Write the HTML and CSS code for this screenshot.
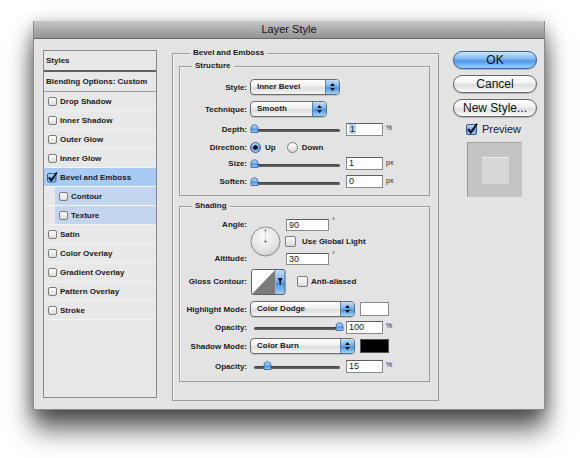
FILE: index.html
```html
<!DOCTYPE html>
<html>
<head>
	<meta charset="utf-8">
	<title>Layer Style</title>
	<link rel="stylesheet" href="styles.css">
</head>
<body>
	<svg class="defs" width="0" height="0">
		<defs>
			<linearGradient id="aqua" x1="0" y1="0" x2="0" y2="1">
				<stop offset="0" stop-color="#c4e0fb"/>
				<stop offset="0.45" stop-color="#78b3ee"/>
				<stop offset="0.55" stop-color="#4a91e4"/>
				<stop offset="1" stop-color="#9fd4fb"/>
			</linearGradient>
			<radialGradient id="dial" cx="0.45" cy="0.35" r="0.7">
				<stop offset="0" stop-color="#fbfbfb"/>
				<stop offset="0.7" stop-color="#e2e2e2"/>
				<stop offset="1" stop-color="#c2c2c2"/>
			</radialGradient>
		</defs>
	</svg>

	<div class="dialog">
		<div class="titlebar">Layer Style</div>
		<div class="dialog-body">

			<ul class="styles-list">
				<li class="styles-head">Styles</li>
				<li class="blend-row">Blending Options: Custom</li>
				<li class="fx"><span class="check"></span>Drop Shadow</li>
				<li class="fx"><span class="check"></span>Inner Shadow</li>
				<li class="fx"><span class="check"></span>Outer Glow</li>
				<li class="fx"><span class="check"></span>Inner Glow</li>
				<li class="fx selected">
					<svg class="check-on" width="11" height="11" viewBox="0 0 11 11"><rect x="0.5" y="1.5" width="8.5" height="8.5" rx="1.5" fill="url(#aqua)" stroke="#33598f"/><path d="M2 5.5 L4.2 8.6 L9.8 0.6" fill="none" stroke="#000" stroke-width="1.7"/></svg>Bevel and Emboss
				</li>
				<li class="fx sub"><span class="check"></span>Contour</li>
				<li class="fx sub"><span class="check"></span>Texture</li>
				<li class="fx"><span class="check"></span>Satin</li>
				<li class="fx"><span class="check"></span>Color Overlay</li>
				<li class="fx"><span class="check"></span>Gradient Overlay</li>
				<li class="fx"><span class="check"></span>Pattern Overlay</li>
				<li class="fx"><span class="check"></span>Stroke</li>
			</ul>

			<div class="group outer">
				<div class="group-title">Bevel and Emboss</div>

				<div class="group structure">
					<div class="group-title">Structure</div>
					<div class="rows structure-rows">
						<div class="row h20">
							<span class="lbl">Style:</span>
							<div class="select w90"><span class="select-text">Inner Bevel</span><span class="select-arrows"><svg width="7" height="10" viewBox="0 0 7 10"><path d="M3.5 1 L6 4 L1 4 Z M1 6 L6 6 L3.5 9 Z" fill="#111"/></svg></span></div>
						</div>
						<div class="row h20">
							<span class="lbl">Technique:</span>
							<div class="select w77"><span class="select-text">Smooth</span><span class="select-arrows"><svg width="7" height="10" viewBox="0 0 7 10"><path d="M3.5 1 L6 4 L1 4 Z M1 6 L6 6 L3.5 9 Z" fill="#111"/></svg></span></div>
						</div>
						<div class="row h16">
							<span class="lbl">Depth:</span>
							<div class="slider">
								<div class="track"></div>
								<svg class="knob" style="left: 0px" width="9" height="9" viewBox="0 0 9 9"><path d="M1 8.5 L1 5 A3.5 4.2 0 0 1 8 5 L8 8.5 Z" fill="url(#aqua)" stroke="#2f5a94" stroke-width="0.8"/></svg>
							</div>
							<span class="field"><span class="sel">1</span></span>
							<span class="unit">%</span>
						</div>
						<div class="row h16">
							<span class="lbl">Direction:</span>
							<span class="radio on"></span><span class="opt">Up</span>
							<span class="radio off"></span><span class="opt">Down</span>
						</div>
						<div class="row h13">
							<span class="lbl">Size:</span>
							<div class="slider">
								<div class="track"></div>
								<svg class="knob" style="left: 0px" width="9" height="9" viewBox="0 0 9 9"><path d="M1 8.5 L1 5 A3.5 4.2 0 0 1 8 5 L8 8.5 Z" fill="url(#aqua)" stroke="#2f5a94" stroke-width="0.8"/></svg>
							</div>
							<span class="field">1</span>
							<span class="unit">px</span>
						</div>
						<div class="row h19">
							<span class="lbl">Soften:</span>
							<div class="slider">
								<div class="track"></div>
								<svg class="knob" style="left: 0px" width="9" height="9" viewBox="0 0 9 9"><path d="M1 8.5 L1 5 A3.5 4.2 0 0 1 8 5 L8 8.5 Z" fill="url(#aqua)" stroke="#2f5a94" stroke-width="0.8"/></svg>
							</div>
							<span class="field">0</span>
							<span class="unit">px</span>
						</div>
					</div>
				</div>

				<div class="group shading">
					<div class="group-title">Shading</div>
					<div class="rows shading-rows">
						<div class="angle-block">
							<span class="lbl-cell angle-lbl">Angle:</span>
							<svg class="dial" width="31" height="31" viewBox="0 0 31 31">
								<circle cx="15.5" cy="15.5" r="14.5" fill="url(#dial)" stroke="#8a8a8a"/>
								<line x1="15.5" y1="14" x2="15.5" y2="3" stroke="#b4b4b4" stroke-dasharray="1 1.5"/>
								<circle cx="15.5" cy="4.5" r="0.9" fill="#777"/>
								<circle cx="15.5" cy="15.5" r="1.1" fill="#555"/>
							</svg>
							<span class="angle-val"><span class="field w43">90</span><span class="unit">°</span></span>
							<span class="global"><span class="check big"></span><span class="opt">Use Global Light</span></span>
							<span class="lbl-cell alt-lbl">Altitude:</span>
							<span class="alt-val"><span class="field w43">30</span><span class="unit">°</span></span>
						</div>
						<div class="row h25 mt2">
							<span class="lbl">Gloss Contour:</span>
							<svg class="contour" width="35" height="26" viewBox="0 0 35 26">
								<rect x="0.5" y="0.5" width="24" height="25" fill="#fff"/>
								<path d="M0.5 25.5 L24.5 0.5 L24.5 25.5 Z" fill="#7c7c7c"/>
								<rect x="24.5" y="0.5" width="9.5" height="25" rx="2" fill="url(#aqua)"/>
								<path d="M26.8 9 L31.6 9 L29.2 14 Z M28.6 13 L29.8 13 L29.8 16 L28.6 16 Z" fill="#111"/>
								<rect x="0.5" y="0.5" width="33.5" height="25" rx="2" fill="none" stroke="#5f5f5f"/>
							</svg>
							<span class="check big anti"></span><span class="opt">Anti-aliased</span>
						</div>
						<div class="row h16 mt7">
							<span class="lbl">Highlight Mode:</span>
							<div class="select w105"><span class="select-text">Color Dodge</span><span class="select-arrows"><svg width="7" height="10" viewBox="0 0 7 10"><path d="M3.5 1 L6 4 L1 4 Z M1 6 L6 6 L3.5 9 Z" fill="#111"/></svg></span></div>
							<span class="swatch white"></span>
						</div>
						<div class="row h14 mt3">
							<span class="lbl">Opacity:</span>
							<div class="slider inset">
								<div class="track"></div>
								<svg class="knob" style="left: 82px" width="9" height="9" viewBox="0 0 9 9"><path d="M1 8.5 L1 5 A3.5 4.2 0 0 1 8 5 L8 8.5 Z" fill="url(#aqua)" stroke="#2f5a94" stroke-width="0.8"/></svg>
							</div>
							<span class="field">100</span>
							<span class="unit">%</span>
						</div>
						<div class="row h16 mt4">
							<span class="lbl">Shadow Mode:</span>
							<div class="select w105"><span class="select-text">Color Burn</span><span class="select-arrows"><svg width="7" height="10" viewBox="0 0 7 10"><path d="M3.5 1 L6 4 L1 4 Z M1 6 L6 6 L3.5 9 Z" fill="#111"/></svg></span></div>
							<span class="swatch black"></span>
						</div>
						<div class="row h14 mt5">
							<span class="lbl">Opacity:</span>
							<div class="slider inset">
								<div class="track"></div>
								<svg class="knob" style="left: 10px" width="9" height="9" viewBox="0 0 9 9"><path d="M1 8.5 L1 5 A3.5 4.2 0 0 1 8 5 L8 8.5 Z" fill="url(#aqua)" stroke="#2f5a94" stroke-width="0.8"/></svg>
							</div>
							<span class="field">15</span>
							<span class="unit">%</span>
						</div>
					</div>
				</div>
			</div>

			<div class="actions">
				<div class="btn default">OK</div>
				<div class="btn">Cancel</div>
				<div class="btn">New Style...</div>
				<div class="preview-row">
					<svg width="12" height="12" viewBox="0 0 12 12"><rect x="0.5" y="1.5" width="10" height="10" rx="1.5" fill="url(#aqua)" stroke="#33598f"/><path d="M2.3 6 L4.8 9.6 L11 0.8" fill="none" stroke="#000" stroke-width="1.9"/></svg>
					<span>Preview</span>
				</div>
				<div class="preview-box"><div class="preview-inner"></div></div>
			</div>

		</div>
	</div>
</body>
</html>
```

FILE: styles.css
```css
* {
	padding: 0;
	margin: 0;
	box-sizing: border-box;
}
li {
	list-style: none;
}
html {
	background: #fff;
}
body {
	min-height: 458px;
	padding: 21px 0 0 33px;
	font-family: "Liberation Sans", Arial, sans-serif;
	color: #1a1a1a;
}
.defs {
	position: absolute;
}

.dialog {
	width: 512px;
	height: 389px;
	background: #e3e3e3;
	border: 1px solid #8b8b8b;
	border-top: 0;
	box-shadow: 0 20px 24px 0 rgba(0, 0, 0, 0.6), 0 4px 16px rgba(0, 0, 0, 0.35);
}
.titlebar {
	height: 18px;
	line-height: 17px;
	text-align: center;
	font-size: 11px;
	color: #151515;
	background: linear-gradient(#c6c6c6, #a6a6a6 60%, #959595);
	border-bottom: 1px solid #686868;
}
.dialog-body {
	display: flex;
	align-items: flex-start;
	padding: 11px 0 0 9px;
}

/* left list */
.styles-list {
	width: 114px;
	height: 348px;
	background: #e8e8e8;
	border: 1px solid #8a8a8a;
	font-size: 8px;
	font-weight: bold;
}
.styles-head {
	height: 21px;
	line-height: 19px;
	padding-left: 2px;
	border-bottom: 2px solid #5f5f5f;
}
.blend-row {
	height: 20px;
	line-height: 19px;
	padding-left: 2px;
	border-bottom: 1px solid #9a9a9a;
}
.fx {
	display: flex;
	align-items: center;
	height: 19px;
	padding-left: 4px;
	border-bottom: 1px solid #f4f4f4;
}
.fx.selected {
	background: #a7cbf5;
	padding-left: 3px;
}
.fx.sub {
	padding-left: 15px;
	background: linear-gradient(90deg, #e8e8e8 11px, #c4d6ee 11px);
}
.check {
	width: 9px;
	height: 9px;
	margin-right: 3px;
	border: 1px solid #7c7c7c;
	border-radius: 2px;
	background: linear-gradient(#fdfdfd, #dcdcdc);
	flex: none;
}
.check-on {
	margin-right: 2px;
	flex: none;
}

/* group frames */
.group {
	border: 1px solid #9d9d9d;
	box-shadow: inset 1px 1px 0 #f2f2f2;
}
.group-title {
	display: table;
	margin: -6px 0 0 12px;
	padding: 0 3px;
	height: 10px;
	line-height: 10px;
	background: #e3e3e3;
	font-size: 8px;
	font-weight: bold;
}
.outer {
	margin: 3px 0 0 15px;
	width: 267px;
	height: 348px;
	padding: 0 8px 0 6px;
}
.outer > .group-title {
	margin-left: 11px;
}
.structure {
	margin-top: 8px;
}
.shading {
	margin-top: 10px;
}
.structure-rows {
	display: flex;
	flex-direction: column;
	gap: 2px;
	padding: 6px 0 4px;
}
.shading-rows {
	display: flex;
	flex-direction: column;
	padding: 5px 0 8px;
}
.row {
	display: flex;
	align-items: center;
	font-size: 8px;
	font-weight: bold;
}
.h13 { height: 13px; }
.h14 { height: 14px; }
.h16 { height: 16px; }
.h19 { height: 19px; }
.h20 { height: 20px; }
.h25 { height: 25px; }
.mt2 { margin-top: 2px; }
.mt3 { margin-top: 3px; }
.mt4 { margin-top: 4px; }
.mt5 { margin-top: 5px; }
.mt7 { margin-top: 7px; }

.lbl {
	width: 67px;
	margin-right: 3px;
	text-align: right;
	flex: none;
}

/* popup menus */
.select {
	display: flex;
	height: 16px;
	border: 1px solid #6a6a6a;
	border-radius: 4px;
	overflow: hidden;
	background: linear-gradient(#ffffff, #efefef 45%, #dcdcdc 55%, #f6f6f6);
	box-shadow: 0 1px 1px rgba(0, 0, 0, 0.15);
}
.w77 { width: 77px; }
.w90 { width: 90px; }
.w105 { width: 105px; }
.select-text {
	flex: 1;
	padding-left: 6px;
	line-height: 14px;
}
.select-arrows {
	width: 14px;
	display: flex;
	align-items: center;
	justify-content: center;
	border-left: 1px solid #5b7fb3;
	background: linear-gradient(#c4e0fb, #78b3ee 45%, #4a91e4 55%, #9fd4fb);
}

/* sliders */
.slider {
	position: relative;
	width: 90px;
	height: 10px;
	flex: none;
}
.slider.inset {
	margin-left: 3px;
	width: 87px;
}
.track {
	position: absolute;
	left: 1px;
	right: 0;
	top: 5px;
	height: 3px;
	border-radius: 2px;
	background: linear-gradient(#3f3f3f, #6a6a6a);
}
.knob {
	position: absolute;
	top: 0;
}

/* text fields */
.field {
	width: 37px;
	height: 13px;
	margin-left: 6px;
	padding-left: 2px;
	line-height: 11px;
	font-size: 9px;
	font-weight: normal;
	background: #fff;
	border: 1px solid #8a8a8a;
	border-top-color: #5e5e5e;
	flex: none;
}
.field.w43 {
	width: 43px;
	height: 12px;
	margin-left: 0;
	line-height: 10px;
}
.sel {
	background: #b3d3fb;
	padding: 0 1px;
}
.unit {
	margin-left: 3px;
	font-size: 7px;
	font-weight: normal;
	align-self: flex-start;
}
.row .unit {
	align-self: auto;
	margin-top: -3px;
}

/* radios */
.radio {
	width: 11px;
	height: 11px;
	border-radius: 50%;
	flex: none;
	margin-right: 4px;
}
.radio.on {
	border: 1px solid #29548f;
	background: radial-gradient(circle, #111 0 2px, transparent 2.5px), linear-gradient(#bfe0fb, #5b9ce8 55%, #9cd1fb);
}
.radio.off {
	margin-left: 11px;
	border: 1px solid #7a7a7a;
	background: linear-gradient(#ffffff, #dadada);
}
.opt {
	font-weight: bold;
	font-size: 8px;
}

/* angle block */
.angle-block {
	display: grid;
	grid-template-columns: 70px 36px auto;
	grid-template-rows: 17px 17px 17px;
	font-size: 8px;
	font-weight: bold;
	align-items: center;
}
.lbl-cell {
	text-align: right;
	padding-right: 3px;
}
.angle-lbl { grid-column: 1; grid-row: 1; }
.alt-lbl { grid-column: 1; grid-row: 3; }
.dial {
	grid-column: 2;
	grid-row: 1 / 4;
}
.angle-val { grid-column: 3; grid-row: 1; display: flex; }
.alt-val { grid-column: 3; grid-row: 3; display: flex; }
.angle-val .unit, .alt-val .unit {
	margin-top: -2px;
}
.global {
	grid-column: 3;
	grid-row: 2;
	display: flex;
	align-items: center;
	margin-left: -1px;
}
.check.big {
	width: 11px;
	height: 11px;
	margin-right: 6px;
}
.contour {
	margin-left: 1px;
	flex: none;
}
.check.anti {
	margin-left: 11px;
	margin-right: 3px;
}

/* colour swatches */
.swatch {
	width: 29px;
	height: 14px;
	margin-left: 5px;
	border: 1px solid #8a8a8a;
}
.swatch.white { background: #fff; }
.swatch.black { background: #000; border-color: #555; }

/* right column */
.actions {
	margin: 1px 0 0 14px;
	width: 84px;
	display: flex;
	flex-direction: column;
	align-items: center;
}
.btn {
	width: 84px;
	height: 18px;
	margin-bottom: 6px;
	border: 1px solid #666;
	border-radius: 9px;
	text-align: center;
	line-height: 16px;
	font-size: 12px;
	color: #111;
	background: linear-gradient(#ffffff, #f2f2f2 45%, #dedede 55%, #fafafa);
	box-shadow: 0 1px 1px rgba(0, 0, 0, 0.2);
}
.btn.default {
	border-color: #37609c;
	background: linear-gradient(#cbe5fc, #7cb7f0 45%, #4d97e8 55%, #97d3fc);
}
.preview-row {
	display: flex;
	align-items: center;
	height: 15px;
	margin: -2px 0 0 -3px;
	font-size: 11px;
}
.preview-row svg {
	margin-right: 4px;
}
.preview-box {
	margin: 6px 0 0 -2px;
	width: 55px;
	height: 55px;
	padding: 14px;
	background: #c4c4c4;
	border-left: 1px solid #999;
	border-top: 1px solid #a4a4a4;
}
.preview-inner {
	width: 27px;
	height: 27px;
	background: #d7d7d7;
	border-top: 1px solid #ececec;
}
```
